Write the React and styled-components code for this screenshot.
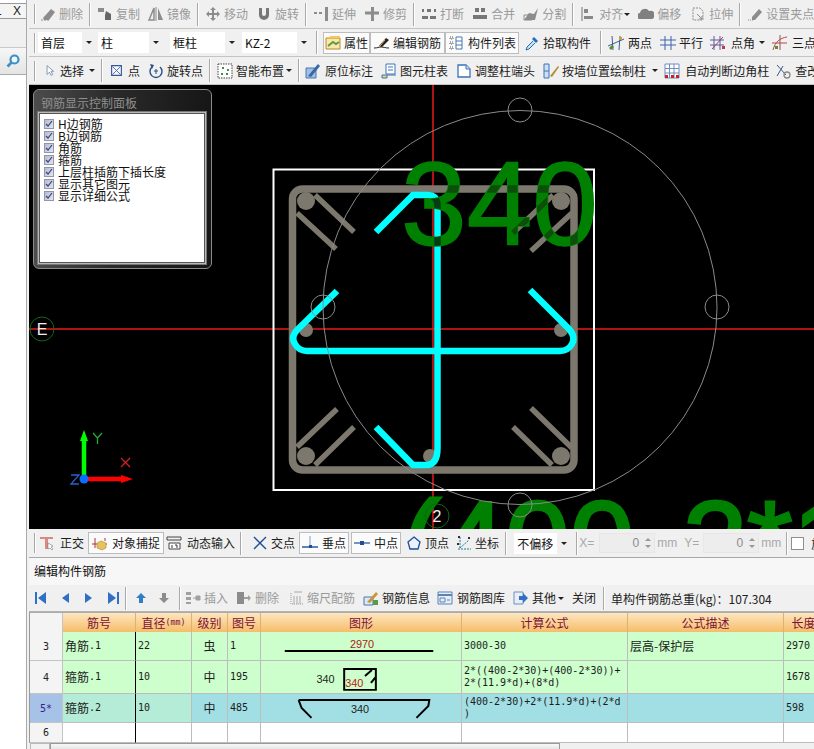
import React from "react";
import styled, { createGlobalStyle } from "styled-components";

const GlobalStyle = createGlobalStyle`
  html, body { margin: 0; padding: 0; background: #fff; }
  body { font-family: "Noto Sans CJK SC", "Liberation Sans", sans-serif; font-size: 12px; color: #222; }
`;

const Page = styled.div`
  width: 814px;
  height: 749px;
  overflow: hidden;
  display: flex;
`;

const Side = styled.div`
  width: 26px;
  flex: none;
  display: flex;
  flex-direction: column;
  background: #fff;
  border-right: 1px solid #a9a9a9;
`;

const SideTab = styled.div`
  height: 14px;
  margin-top: 3px;
  display: flex;
  justify-content: space-between;
  align-items: center;
  padding-right: 5px;
  overflow: hidden;
  font-family: "Liberation Sans", sans-serif;
  font-size: 12px;
  border-top: 1px solid #999;
  border-bottom: 1px solid #999;
  background: #f4f4f4;
  span:first-child { margin-left: -5px; }
`;

const SideBlank = styled.div`
  height: 28px;
  background: #f0f0f0;
  border-bottom: 1px solid #c8c8c8;
`;

const SideSearch = styled.div`
  height: 26px;
  display: flex;
  align-items: center;
  justify-content: center;
  background: linear-gradient(#f6f6f6, #e4e4e4);
  border-bottom: 1px solid #aaa;
`;

const Main = styled.div`
  flex: 1;
  min-width: 0;
  display: flex;
  flex-direction: column;
  padding-left: 2px;
  background: #f0f0f0;
`;

const Bar = styled.div`
  height: ${(p) => p.$h}px;
  flex: none;
  display: flex;
  align-items: center;
  padding-left: 5px;
  white-space: nowrap;
  overflow: hidden;
  background: ${(p) => p.$bg || "#f0f0f0"};
  border-bottom: 1px solid ${(p) => p.$line || "#c4c4c4"};
  box-sizing: border-box;
`;

const Grip = styled.span`
  width: 1px;
  height: 20px;
  flex: none;
  background: #a8a8a8;
  border-right: 1px solid #fff;
  margin-right: ${(p) => p.$mr ?? 4}px;
`;

const Sep = styled.span`
  width: 1px;
  height: 23px;
  flex: none;
  background: #a8a8a8;
  border-right: 1px solid #fff;
  margin: 0 ${(p) => p.$mr ?? 6}px 0 ${(p) => p.$ml ?? 6}px;
`;

const Tool = styled.div`
  display: flex;
  align-items: center;
  flex: none;
  gap: ${(p) => p.$gap ?? 3}px;
  height: 22px;
  box-sizing: border-box;
  padding: 0 ${(p) => p.$pad ?? 0}px;
  margin-right: ${(p) => p.$mr ?? 8}px;
  color: ${(p) => (p.$off ? "#9a9a9a" : "#1c1c1c")};
  background: ${(p) => (p.$on ? "#fbfbfb" : "transparent")};
  border: ${(p) => (p.$on ? "1px solid #bdbdbd" : "none")};
  line-height: 1;
`;

const Caret = styled.span`
  width: 0;
  height: 0;
  flex: none;
  margin-left: ${(p) => p.$ml ?? 0}px;
  border-left: 3px solid transparent;
  border-right: 3px solid transparent;
  border-top: 3px solid #222;
`;

const Select = styled.div`
  width: ${(p) => p.$w}px;
  height: 21px;
  flex: none;
  display: flex;
  align-items: center;
  justify-content: space-between;
  box-sizing: border-box;
  padding: 0 3px 0 3px;
  margin-right: ${(p) => p.$mr ?? 3}px;
  background: linear-gradient(to right, #fff 0, #fff calc(100% - 13px), #f0f0f0 calc(100% - 13px));
  color: #111;
`;

const Faint = styled.span`
  color: #a8a8a8;
  font-family: "Liberation Sans", sans-serif;
  font-size: 12px;
  margin-right: ${(p) => p.$mr ?? 3}px;
`;

const Spin = styled.div`
  width: ${(p) => p.$w}px;
  height: 20px;
  flex: none;
  margin-right: 2px;
  display: flex;
  align-items: center;
  justify-content: flex-end;
  gap: 6px;
  padding-right: 3px;
  box-sizing: border-box;
  background: #ededed;
  border: 1px solid #e6e6e6;
  color: #8a8a8a;
  font-family: "Liberation Sans", sans-serif;
`;

const SpinArrows = styled.span`
  display: flex;
  flex-direction: column;
  gap: 4px;
  &::before, &::after { content: ""; border-left: 3px solid transparent; border-right: 3px solid transparent; }
  &::before { border-bottom: 3px solid #999; }
  &::after { border-top: 3px solid #999; }
`;

const Check = styled.span`
  width: 11px;
  height: 11px;
  flex: none;
  margin: 0 7px 0 3px;
  background: #fff;
  border: 1px solid #8e8e8e;
`;

const Canvas = styled.div`
  height: 444px;
  flex: none;
  position: relative;
  background: #000;
  overflow: hidden;
  svg.scene { display: block; }
`;

const Floating = styled.div`
  position: absolute;
  left: 4px;
  top: 4px;
  width: 179px;
  height: 180px;
  box-sizing: border-box;
  border: 1px solid #8b8b8b;
  border-radius: 6px;
  background: linear-gradient(to right, #4c4c4c, #2a2a2a 45%, #161616);
  display: flex;
  flex-direction: column;
  padding: 3px 5px 4px 4px;
`;

const FloatTitle = styled.div`
  height: 19px;
  padding-left: 3px;
  line-height: 19px;
  color: #8f8f8f;
`;

const FloatBody = styled.div`
  flex: 1;
  background: #fff;
  border: 1px solid #b9b9b9;
  outline: 1px solid #777;
  box-shadow: inset 0 0 0 1px #555;
  padding: 5px 0 0 5px;
  display: flex;
  flex-direction: column;
  color: #111;
`;

const FloatRow = styled.div`
  height: 12px;
  display: flex;
  align-items: center;
  gap: 4px;
  line-height: 12px;
`;

const Box = styled.span`
  width: 10px;
  height: 10px;
  flex: none;
  box-sizing: border-box;
  background: linear-gradient(135deg, #b8bccb, #e3e5ee);
  border: 1px solid #9296a8;
  display: flex;
  align-items: center;
  justify-content: center;
`;

const PanelTitle = styled.div`
  height: 27px;
  flex: none;
  display: flex;
  align-items: center;
  padding: 0 0 2px 5px;
  box-sizing: border-box;
  background: #f7f7f7;
  color: #111;
`;

const Grid = styled.div`
  flex: 1;
  min-height: 0;
  display: grid;
  grid-template-columns: 33px 73px 56px 36px 33px 201px 166px 156px 60px;
  grid-template-rows: 19px 29px 33px 29px 20px;
  overflow: hidden;
  background: #fff;
  border-top: 1px solid #aaa;
  border-left: 1px solid #999;
  align-content: start;
`;

const Head = styled.div`
  display: flex;
  align-items: center;
  justify-content: center;
  color: #7a1238;
  background: linear-gradient(#fde6bf, #f6bd6a);
  border-right: 1px solid #e0b070;
  line-height: 1;
  overflow: hidden;
  white-space: nowrap;
`;

const HeadUnit = styled.span`
  font-family: "DejaVu Sans Mono", monospace;
  font-size: 8.300px;
`;

const Corner = styled.div`
  background: #f4f4f4;
  border-right: 1px solid #c4c4c4;
`;

const RowNo = styled.div`
  display: flex;
  align-items: center;
  justify-content: center;
  font-family: "DejaVu Sans Mono", monospace;
  font-size: 10px;
  color: ${(p) => (p.$sel ? "#3a1a8a" : "#222")};
  background: ${(p) => (p.$sel ? "#a6c2e6" : "#f4f4f4")};
  border-right: 1px solid #c4c4c4;
  border-bottom: 1px solid #c4c4c4;
`;

const Cell = styled.div`
  display: flex;
  align-items: center;
  justify-content: ${(p) => (p.$center ? "center" : "flex-start")};
  padding-left: ${(p) => (p.$center ? 0 : 2)}px;
  box-sizing: border-box;
  min-width: 0;
  overflow: hidden;
  background: ${(p) => p.$bg};
  color: #1c1c1c;
  font-family: "DejaVu Sans Mono", "Noto Sans CJK SC", monospace;
  font-size: 10px;
  line-height: 12px;
  border-right: 1px solid ${(p) => (p.$frozen ? "#000" : "#bdbdbd")};
  border-bottom: 1px solid #bdbdbd;
`;

const Cjk = styled.span`
  font-family: "Noto Sans CJK SC", sans-serif;
  font-size: 12px;
`;

const Formula = styled.div`
  white-space: pre-line;
`;

const Scroll = styled.div`
  height: 6px;
  flex: none;
  display: flex;
  margin-left: 1px;
  background: #f0f0f0;
`;

const ScrollBtn = styled.div`
  width: 18px;
  background: #f2f2f2;
  border: 1px solid #b8b8b8;
  border-bottom: none;
`;

const ScrollThumb = styled.div`
  width: 508px;
  background: linear-gradient(#f8f8f8, #e6e6e6);
  border: 1px solid #9a9a9a;
  border-bottom: none;
`;

const Svg = styled.svg`
  flex: none;
  display: block;
  width: ${(p) => p.$w || 16}px;
  height: ${(p) => p.$h || 16}px;
`;

const Shape = styled.svg`
  display: block;
  width: 200px;
  height: 100%;
  font-family: "Liberation Sans", sans-serif;
  font-size: 11px;
`;

// icon set, all drawn on a 16x16 box
const g = "#8c8c8c";
const icons = {
  del: <><path d="M1 14h8" stroke={g} strokeDasharray="2 1" /><path d="M3 12 11 3l4 3-6 8H4z" fill={g} /></>,
  copy: <><path d="M1 2h6v4H1z" fill={g} /><path d="M9 5l5 3v6H8V9z" fill="#666" /></>,
  mirror: <><path d="M1 14 6 2v12z" fill="none" stroke={g} strokeWidth="1.5" /><path d="M10 2l5 12h-5z" fill={g} /><path d="M8 1v14" stroke={g} /></>,
  move: <path d="M8 1l3 3H9v3h3V5l3 3-3 3V9H9v3h2l-3 3-3-3h2V9H4v2L1 8l3-3v2h3V4H5z" fill={g} />,
  rotate: <path d="M3 2h3v6a2 2 0 0 0 4 0V2h3v7a5 5 0 0 1-10 0z" fill="#777" />,
  extend: <><path d="M1 7h3M6 7h3" stroke={g} strokeWidth="2" /><path d="M12 1h3v14h-3z" fill={g} /></>,
  trim: <><path d="M1 7h14" stroke={g} strokeWidth="3" /><path d="M7 1h3v14H7z" fill={g} /></>,
  brk: <><path d="M1 3h2v3H1zM13 3h2v3h-2zM1 10h6v3H1zM9 10h6v3H9zM6 3h4v3H6z" fill="#777" /></>,
  merge: <><path d="M3 2h4v4H3zM9 2h4v4H9zM1 9h14v4H1z" fill="#777" /></>,
  split: <><path d="M1 14l5-7 5 1 4-6-3 12z" fill={g} /><path d="M1 9h8v5H1z" fill="none" stroke={g} /></>,
  align: <><path d="M2 1v14" stroke="#777" /><path d="M4 3h4v4H4zM4 10h9v3H4z" fill="#888" /></>,
  cloud: <path d="M2 13a3 3 0 0 1 0-6 5 5 0 0 1 9-2 4 4 0 0 1 3 8z" fill="#808080" />,
  stretch: <><path d="M3 2h7l3 3v9H3z" fill="none" stroke={g} strokeDasharray="2 1" /><path d="M7 8l5 5M12 10v3H9" stroke={g} fill="none" /></>,
  grip: <><path d="M1 14h6" stroke={g} strokeDasharray="1 1" /><path d="M5 11l7-8 3 3-7 8H5z" fill={g} /></>,
  prop: <><path d="M1 3h14v11H1z" fill="#fbe7a6" stroke="#b8892d" /><path d="M1 3l5-2h9v2" fill="#f3c95e" /><path d="M3 11l5-4 3 2 3-2" stroke="#5a9b4b" strokeWidth="2" fill="none" /></>,
  rebar: <><path d="M0 13c4 0 4-1 7-1s4 1 8 1" stroke="#222" fill="none" /><path d="M5 11l7-8 3 2-7 7z" fill="#222" /><path d="M6 11l5-6" stroke="#e8b33e" /></>,
  list: <><path d="M2 2h3v2H2zM2 7h3v2H2zM2 12h3v2H2z" fill="none" stroke="#555" strokeDasharray="1 1" /><path d="M8 2h6v12H8zM8 6h6M8 10h6" fill="#fff" stroke="#4a78b2" /></>,
  pick: <><path d="M10 2l4 4-2 2-4-4z" fill="#1e6fc0" /><path d="M9 6l-6 6-1 3 3-1 6-6" fill="#bfe2f7" stroke="#2d6ea8" /></>,
  two: <><path d="M4 1l1 14M12 1l-1 14M0 11 16 4" stroke="#3d5f93" fill="none" /><path d="M1 13l3-3 2 2-3 3z" fill="#5a8a3c" /><path d="M11 2h3v3h-3z" fill="#c8a13c" /></>,
  para: <path d="M5 1v14M11 1v14M0 5h16M0 10h16" stroke="#3f62a8" fill="none" />,
  angle: <><path d="M4 1v14M10 1v14M0 5h14M0 10h14" stroke="#5c5c9c" fill="none" /><path d="M2 14 13 2" stroke="#a33a6a" /><path d="M12 11h3v3h-3z" fill="#c43b3b" /></>,
  three: <><path d="M1 15c2-8 7-12 14-13M8 0v15M0 8h15" stroke="#b04b4b" fill="none" /><path d="M3 11h3v3H3z" fill="#5a8a3c" /></>,
  arrow: <path d="M5 2v11l3-3 2 4 2-1-2-4h3z" fill="#fff" stroke="#6d84a8" />,
  cross: <><path d="M2 2h12v12H2z" fill="#f6f8ff" stroke="#36579a" strokeWidth="1.4" /><path d="M3 3l10 10M13 3 3 13" stroke="#36579a" /></>,
  spin: <><path d="M4 4a6 6 0 1 0 8 0" fill="none" stroke="#2c4f86" strokeWidth="1.4" /><path d="M2 1l4 1-2 4z" fill="#2c4f86" /><path d="M8 6v5M6 8h4" stroke="#2c4f86" /></>,
  smart: <><path d="M1 1h14v14H1z" fill="#fff" stroke="#444" strokeDasharray="1.5 1" /><path d="M5 4h2v2H5zM10 6h2v2h-2zM4 10h2v2H4zM9 10h2v2H9z" fill="#3e8f4d" /></>,
  mark: <><path d="M1 5h10v10H1z" fill="#9dc0e4" stroke="#4d76a8" /><path d="M3 13 13 1l2 2L6 14z" fill="#3668a6" /></>,
  table: <><path d="M5 1h9v10H5z" fill="#fff" stroke="#3c74b8" /><path d="M7 4h5M7 7h5" stroke="#3c74b8" /><path d="M1 12h5v3H1zM6 12h9" fill="#f3d36a" stroke="#3c74b8" /></>,
  adjust: <><path d="M2 2h8l4 4v8H2z" fill="#fff" stroke="#3c74b8" strokeWidth="1.3" /><path d="M10 2v4h4" fill="#cfe0f4" stroke="#3c74b8" /></>,
  wall: <><path d="M1 1h5v14H1z" fill="#cfe0f4" stroke="#3c74b8" /><path d="M1 8h5" stroke="#3c74b8" /><path d="M7 13 15 3l1 1-7 10z" fill="#b88b2c" /></>,
  auto: <><path d="M1 1h14v14H1zM5.500 1v14M10 1v14M1 5.500h14M1 10h14" fill="#fff" stroke="#6f8fc0" /><path d="M1 12h3v3H1zM12 12h3v3h-3zM7 12h3v3H7z" fill="#c22" /></>,
  inspect: <><path d="M2 2l9 10M2 13 8 3" stroke="#3c5a88" /><circle cx="12" cy="12" r="3" fill="none" stroke="#888" strokeWidth="1.3" /></>,
  ortho: <><path d="M1 2h13v2H9v10H6V4H1z" fill="#d88a80" /><path d="M9 8v6l2-1 2 2 1-1-2-2 2-1z" fill="#fff" stroke="#777" strokeWidth=".6" /></>,
  snap: <><path d="M0 9h15M3 3v10M13 3v3" stroke="#a33a2a" /><path d="M5 8l4-2 5 2v5l-4 2-5-2z" fill="#e8c25a" stroke="#9a7a2a" strokeWidth=".5" /></>,
  dyn: <><path d="M1 2h14M1 5h14M1 2v3M15 2v3" stroke="#444" fill="none" /><path d="M3 8h11v6H3z" fill="#fff" stroke="#444" /><path d="M6 10v3M9 10h2v3" stroke="#333" fill="none" /></>,
  cross2: <path d="M2 2l12 12M14 2 2 14" stroke="#1f4e96" strokeWidth="1.4" />,
  perp: <><path d="M0 12h16" stroke="#1f4e96" strokeWidth="1.4" /><path d="M8 1v11" stroke="#7ea0cc" /><path d="M7 10h3v3H7z" fill="#1f4e96" /></>,
  mid: <><path d="M0 8h16" stroke="#1f4e96" strokeWidth="1.2" /><path d="M6 6h4v4H6z" fill="#1f4e96" /></>,
  vert: <path d="M8 2l6 5-2 7H4L2 7z" fill="#eaf3fb" stroke="#1f4e96" strokeWidth="1.3" />,
  coord: <><path d="M2 14h13M4 2v12M4 13 13 5" stroke="#1f7a9c" strokeDasharray="2 1" fill="none" /><path d="M2 1h2v2H2zM12 2h2v2h-2zM1 8h2v2H1z" fill="#333" /></>,
  first: <path d="M1 2h2v12H1zM12 2v12L4 8z" fill="#2f6fc4" />,
  prev: <path d="M11 3v10L4 8z" fill="#2f6fc4" />,
  next: <path d="M5 3v10l7-5z" fill="#2f6fc4" />,
  last: <path d="M13 2h2v12h-2zM4 2v12l8-6z" fill="#2f6fc4" />,
  up: <path d="M8 3l5 5h-3v5H6V8H3z" fill="#2f7fc4" />,
  down: <path d="M6 3h4v5h3l-5 5-5-5h3z" fill="#8c8c8c" />,
  insert: <><path d="M1 2h5v3H1zM1 7h5v3H1zM1 12h5v2H1z" fill="#a0a0a0" /><path d="M8 8h3V6h4v4h-4V8" fill="#a0a0a0" stroke="#a0a0a0" /></>,
  remove: <><path d="M1 2h7v12H1z" fill="#8c8c8c" /><path d="M8 7h4V5l3 3-3 3V9H8z" fill="#a0a0a0" /></>,
  scale: <><path d="M2 3v11h12" stroke="#999" fill="none" strokeDasharray="1 1" /><path d="M5 6v8M8 6v8M11 6v8M5 2h8" stroke="#aaa" /></>,
  info: <><path d="M1 7h9v8H1z" fill="#dce8f4" stroke="#4a78b2" /><path d="M4 12 13 2l2 2-8 9z" fill="#c9963a" /><path d="M10 10h5v5h-5z" fill="#5a9b4b" /></>,
  lib: <><path d="M1 2h14v12H1z" fill="#e7eef8" stroke="#5a83b8" /><path d="M1 5h14" stroke="#5a83b8" strokeWidth="2" /><path d="M3 8h5v4H3zM10 10h3" stroke="#5a83b8" fill="none" /></>,
  other: <><path d="M2 2h9v12H2z" fill="#e7eef8" stroke="#6f8fb8" /><path d="M7 6h4V3l5 5-5 5v-3H7z" fill="#2f6fc4" /></>,
  search: <><circle cx="9.500" cy="6.500" r="4" fill="#eef7fd" stroke="#3e8fc4" strokeWidth="2.200" /><path d="M6.500 9.500l-4 4" stroke="#3e8fc4" strokeWidth="2.600" /></>,
};

const Icon = ({ name, w }) => (
  <Svg viewBox="0 0 16 16" $w={w} $h={w}>{icons[name]}</Svg>
);

const ToolBtn = ({ icon, label, off, on, caret, cml, mr, pad, gap, w }) => (
  <Tool $off={off} $on={on} $mr={mr} $pad={pad} $gap={gap}>
    {icon && <Icon name={icon} w={w} />}
    {label && <span>{label}</span>}
    {caret && <Caret $ml={cml} />}
  </Tool>
);

const floatItems = ["H边钢筋", "B边钢筋", "角筋", "箍筋", "上层柱插筋下插长度", "显示其它图元", "显示详细公式"];

const frame = "#7d786e";
const aqua = "#00ffff";

// the bars of the section, drawn twice: normally and darkened under the big text
const GrayBars = ({ stroke, fill }) => (
  <g stroke={stroke} fill="none">
    <rect x="292.500" y="189" width="281.500" height="281" rx="10" strokeWidth="7.500" />
    <g strokeWidth="5.500">
      <path d="M297 213 336 249M315 195 354 232M572 213 531 251M553 195 513 233" />
      <path d="M297 447 337 409M315 465 354 427M572 448 531 408M552 465 513 427" />
    </g>
    <g fill={fill} stroke="none">
      <circle cx="306" cy="201" r="9" />
      <circle cx="561" cy="201" r="9" />
      <circle cx="306" cy="456" r="9" />
      <circle cx="561" cy="456" r="9" />
      <circle cx="306" cy="330" r="7" />
      <circle cx="561" cy="330" r="7" />
      <circle cx="430" cy="456" r="7" />
    </g>
  </g>
);

const AquaBars = ({ stroke }) => (
  <g stroke={stroke} strokeWidth="6.500" fill="none">
    <path d="M376 232 413 195H427Q437.500 195 437.500 206V448Q437.500 465 426 465H413L376 427" />
    <path d="M337 291 298 329Q290 337 295 344 299 351 307 351H560Q568 351 572 344 576 337 569 329L530 290" />
  </g>
);

const Scene = () => (
  <svg className="scene" width="785" height="444" viewBox="29 85 785 444" fontFamily="Liberation Sans, sans-serif">
    <defs>
      <clipPath id="big340">
        <text x="401" y="245" fontSize="118">340</text>
      </clipPath>
    </defs>
    <path d="M433 85V529M29 329H814" stroke="#e81818" strokeWidth="1.500" />
    <rect x="273.500" y="169.500" width="320.500" height="320.500" fill="none" stroke="#fff" strokeWidth="2" />
    <GrayBars stroke={frame} fill={frame} />
    <AquaBars stroke={aqua} />
    <text x="401" y="245" fontSize="118" fill="#008000" stroke="#008000" strokeWidth="1.500">340</text>
    <g clipPath="url(#big340)">
      <GrayBars stroke="#0b4f0b" fill="#0b4f0b" />
      <AquaBars stroke="#033d14" />
    </g>
    <text x="402" y="583" fontSize="116" fill="#008000" stroke="#008000" strokeWidth="3">(400-<tspan dx="10">2*1</tspan></text>
    <g fill="none" stroke="#8a8a8a">
      <circle cx="520" cy="307.500" r="197" />
      <circle cx="520" cy="110" r="12" />
      <circle cx="323" cy="307" r="12" />
      <circle cx="717" cy="307" r="12" />
      <circle cx="520" cy="505" r="12" />
    </g>
    <circle cx="42" cy="329" r="12" fill="none" stroke="#14641e" />
    <text x="42" y="335" fontSize="16" textAnchor="middle" fill="#eee">E</text>
    <circle cx="437" cy="516" r="12" fill="none" stroke="#14641e" />
    <text x="437" y="522" fontSize="16" textAnchor="middle" fill="#eee">2</text>
    <path d="M84 479V440" stroke="#00ff00" strokeWidth="4.500" />
    <path d="M84 430l4 11h-8z" fill="#00ff00" />
    <path d="M84 479h39" stroke="#f00" strokeWidth="4.500" />
    <path d="M133 479l-12-4v8z" fill="#f00" />
    <circle cx="84" cy="479" r="4.500" fill="#0b6cff" />
    <path d="M93 433l4.500 5 4.500-5M97.500 438v6" stroke="#1fae3a" strokeWidth="1.300" fill="none" />
    <path d="M121 458l9 9M130 458l-9 9" stroke="#d02020" strokeWidth="1.300" fill="none" />
    <path d="M71 475h8l-8 9h8" stroke="#2a62c8" strokeWidth="1.300" fill="none" />
  </svg>
);

const rows = [
  { no: "3", bg: "#ccffcc", name: "角筋", idx: ".1", dia: "22", grade: "虫", code: "1", len: "2970" },
  { no: "4", bg: "#ccffcc", name: "箍筋", idx: ".1", dia: "10", grade: "中", code: "195", len: "1678" },
  { no: "5*", bg: "#a2dfe4", bg2: "#b4ecd8", sel: true, name: "箍筋", idx: ".2", dia: "10", grade: "中", code: "485", len: "598" },
];

const shapes = {
  3: (
    <Shape viewBox="0 0 200 28">
      <text x="100" y="16" textAnchor="middle" fill="#b01818">2970</text>
      <path d="M22 19H172" stroke="#000" strokeWidth="2" />
    </Shape>
  ),
  4: (
    <Shape viewBox="0 0 200 32">
      <text x="54" y="22" fill="#222">340</text>
      <path d="M82 8H114V29H82ZM103 15l7-6M109 22l5-6" stroke="#000" strokeWidth="2" fill="none" />
      <text x="83" y="26" fill="#c01818">340</text>
    </Shape>
  ),
  5: (
    <Shape viewBox="0 0 200 28">
      <path d="M36 6H168L167 12 155 24M36 6l3 8 10 10" stroke="#000" strokeWidth="2" fill="none" />
      <text x="98" y="19" textAnchor="middle" fill="#222">340</text>
    </Shape>
  ),
};

const formulas = {
  3: "3000-30",
  4: "2*((400-2*30)+(400-2*30))+\n2*(11.9*d)+(8*d)",
  5: "(400-2*30)+2*(11.9*d)+(2*d\n)",
};

export default function App() {
  return (
    <Page>
      <GlobalStyle />
      <Side>
        <SideTab><span>1</span><span>X</span></SideTab>
        <SideBlank />
        <SideSearch><Icon name="search" /></SideSearch>
      </Side>
      <Main>
        <Bar $h={29}>
          <Grip />
          <ToolBtn off icon="del" label="删除" mr={0} />
          <Sep />
          <ToolBtn off icon="copy" label="复制" />
          <ToolBtn off icon="mirror" label="镜像" mr={0} />
          <Sep />
          <ToolBtn off icon="move" label="移动" />
          <ToolBtn off icon="rotate" label="旋转" mr={0} />
          <Sep />
          <ToolBtn off icon="extend" label="延伸" />
          <ToolBtn off icon="trim" label="修剪" mr={0} />
          <Sep />
          <ToolBtn off icon="brk" label="打断" />
          <ToolBtn off icon="merge" label="合并" />
          <ToolBtn off icon="split" label="分割" mr={0} />
          <Sep />
          <ToolBtn off icon="align" label="对齐" caret cml={-2} />
          <ToolBtn off icon="cloud" label="偏移" mr={9} />
          <ToolBtn off icon="stretch" label="拉伸" mr={0} />
          <Sep />
          <ToolBtn off icon="grip" label="设置夹点" />
        </Bar>
        <Bar $h={28}>
          <Grip $mr={2} />
          <Select $w={57}>首层<Caret /></Select>
          <Select $w={64} $mr={8}>柱<Caret /></Select>
          <Select $w={68} $mr={4}>框柱<Caret /></Select>
          <Select $w={68} $mr={0}>KZ-2<Caret /></Select>
          <Sep $ml={6} $mr={5} />
          <ToolBtn on icon="prop" label="属性" mr={0} pad={1} />
          <ToolBtn on icon="rebar" label="编辑钢筋" mr={0} pad={3} />
          <ToolBtn on icon="list" label="构件列表" mr={5} pad={2} gap={4} />
          <ToolBtn icon="pick" label="拾取构件" mr={0} />
          <Sep $ml={9} $mr={6} />
          <ToolBtn icon="two" label="两点" gap={4} />
          <ToolBtn icon="para" label="平行" mr={7} />
          <ToolBtn icon="angle" label="点角" caret cml={-1} mr={7} gap={5} />
          <ToolBtn icon="three" label="三点" gap={4} />
        </Bar>
        <Bar $h={28}>
          <Grip $mr={7} />
          <ToolBtn icon="arrow" w={13} label="选择" caret cml={1} gap={4} mr={0} />
          <Sep $mr={7} />
          <ToolBtn icon="cross" w={13} label="点" gap={5} />
          <ToolBtn icon="spin" label="旋转点" mr={0} />
          <Sep />
          <ToolBtn icon="smart" label="智能布置" caret cml={-1} mr={0} />
          <Sep $mr={5} />
          <ToolBtn icon="mark" label="原位标注" gap={4} />
          <ToolBtn icon="table" label="图元柱表" />
          <ToolBtn icon="adjust" label="调整柱端头" />
          <ToolBtn icon="wall" label="按墙位置绘制柱" caret cml={3} mr={6} />
          <ToolBtn icon="auto" label="自动判断边角柱" gap={5} mr={6} />
          <ToolBtn icon="inspect" label="查改" gap={4} />
        </Bar>
        <Canvas>
          <Scene />
          <Floating>
            <FloatTitle>钢筋显示控制面板</FloatTitle>
            <FloatBody>
              {floatItems.map((t) => (
                <FloatRow key={t}>
                  <Box>
                    <Svg viewBox="0 0 8 8" $w={8} $h={8}><path d="M1 4l2 2 4-5" stroke="#33458a" strokeWidth="1.2" fill="none" /></Svg>
                  </Box>
                  <span>{t}</span>
                </FloatRow>
              ))}
            </FloatBody>
          </Floating>
        </Canvas>
        <Bar $h={29} $line="#a8a8a8">
          <Grip $mr={3} />
          <ToolBtn icon="ortho" label="正交" mr={4} gap={5} />
          <ToolBtn on icon="snap" label="对象捕捉" mr={2} pad={3} gap={4} />
          <ToolBtn icon="dyn" label="动态输入" mr={0} gap={5} />
          <Sep $ml={5} $mr={10} />
          <ToolBtn icon="cross2" label="交点" mr={4} />
          <ToolBtn on icon="perp" label="垂点" mr={2} pad={2} gap={4} />
          <ToolBtn on icon="mid" label="中点" mr={5} pad={2} gap={4} />
          <ToolBtn icon="vert" label="顶点" mr={7} />
          <ToolBtn icon="coord" label="坐标" mr={0} />
          <Sep $mr={7} />
          <Select $w={56} $mr={0}>不偏移<Caret /></Select>
          <Sep $ml={6} $mr={1} />
          <Faint $mr={5}>X=</Faint>
          <Spin $w={56}>0<SpinArrows /></Spin>
          <Faint $mr={7}>mm</Faint>
          <Faint $mr={4}>Y=</Faint>
          <Spin $w={56}>0<SpinArrows /></Spin>
          <Faint $mr={0}>mm</Faint>
          <Sep $ml={5} $mr={0} />
          <Check />
          <span>旋转</span>
        </Bar>
        <PanelTitle>编辑构件钢筋</PanelTitle>
        <Bar $h={27} $line="#b4b4b4">
          <ToolBtn icon="first" mr={8} />
          <ToolBtn icon="prev" mr={6} />
          <ToolBtn icon="next" mr={8} />
          <ToolBtn icon="last" mr={0} />
          <Sep $ml={5} />
          <ToolBtn icon="up" mr={7} />
          <ToolBtn icon="down" mr={0} />
          <Sep $ml={7} $mr={4} />
          <ToolBtn off icon="insert" label="插入" />
          <ToolBtn off icon="remove" label="删除" mr={10} />
          <ToolBtn off icon="scale" label="缩尺配筋" gap={2} />
          <ToolBtn icon="info" label="钢筋信息" mr={7} />
          <ToolBtn icon="lib" label="钢筋图库" mr={7} gap={4} />
          <ToolBtn icon="other" label="其他" caret cml={-2} mr={8} gap={4} />
          <ToolBtn label="关闭" mr={0} />
          <Sep $ml={7} />
          <span>单构件钢筋总重(kg)：107.304</span>
        </Bar>
        <Grid>
          <Corner />
          <Head>筋号</Head>
          <Head>直径<HeadUnit>(mm)</HeadUnit></Head>
          <Head>级别</Head>
          <Head>图号</Head>
          <Head>图形</Head>
          <Head>计算公式</Head>
          <Head>公式描述</Head>
          <Head>长度<HeadUnit>(mm)</HeadUnit></Head>
          {rows.map((r) => (
            <React.Fragment key={r.no}>
              <RowNo $sel={r.sel}>{r.no}</RowNo>
              <Cell $bg={r.bg2 || r.bg} $frozen><Cjk>{r.name}</Cjk>{r.idx}</Cell>
              <Cell $bg={r.bg2 || r.bg}>{r.dia}</Cell>
              <Cell $bg={r.bg} $center><Cjk>{r.grade}</Cjk></Cell>
              <Cell $bg={r.bg}>{r.code}</Cell>
              <Cell $bg={r.bg}>{shapes[r.no[0]]}</Cell>
              <Cell $bg={r.bg}><Formula>{formulas[r.no[0]]}</Formula></Cell>
              <Cell $bg={r.bg}>{r.no === "3" && <Cjk>层高-保护层</Cjk>}</Cell>
              <Cell $bg={r.bg}>{r.len}</Cell>
            </React.Fragment>
          ))}
          <RowNo>6</RowNo>
          <Cell $bg="#fff" $frozen />
          <Cell $bg="#fff" />
          <Cell $bg="#fff" />
          <Cell $bg="#fff" />
          <Cell $bg="#fff" />
          <Cell $bg="#fff" />
          <Cell $bg="#fff" />
          <Cell $bg="#fff" />
        </Grid>
        <Scroll>
          <ScrollBtn />
          <ScrollThumb />
        </Scroll>
      </Main>
    </Page>
  );
}
